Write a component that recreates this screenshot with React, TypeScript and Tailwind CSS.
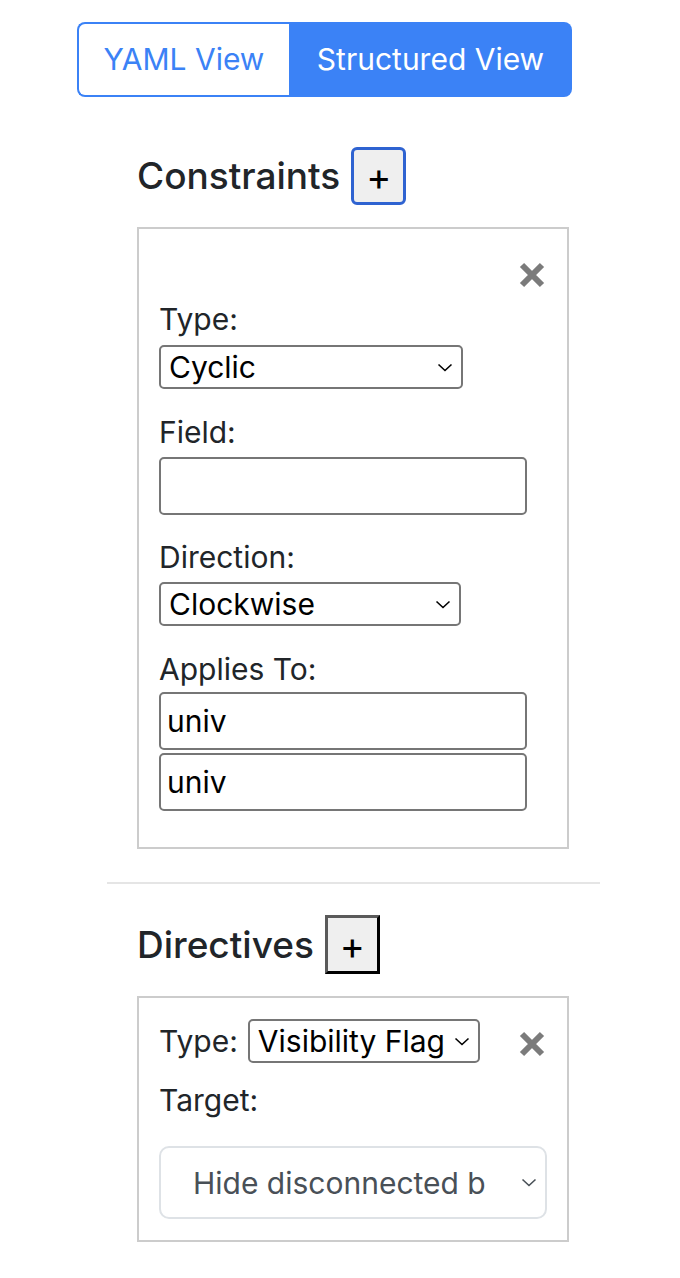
import React from "react";

const font = "font-['Inter','Noto_Sans',sans-serif]";

function Chevron({ className = "" }: { className?: string }) {
  return (
    <svg width="16" height="9" viewBox="0 0 16 9" className={className} fill="none">
      <path d="M1.5 1.5 L8 7.5 L14.5 1.5" stroke="currentColor" strokeWidth="1.6" />
    </svg>
  );
}

function CloseIcon() {
  return (
    <svg width="26" height="26" viewBox="0 0 26 26" className="shrink-0">
      <path d="M3 3 L23 23 M23 3 L3 23" stroke="#7b7b7b" strokeWidth="6" />
    </svg>
  );
}

function FakeSelect({ value, width }: { value: string; width: string }) {
  return (
    <div
      className={`${width} h-[44px] flex items-center justify-between border-2 border-[#767676] rounded-[5px] pl-[8px] pr-[8px] bg-white text-black text-[30px]`}
    >
      <span className="whitespace-nowrap leading-[36px]">{value}</span>
      <Chevron className="text-black shrink-0 ml-[4px]" />
    </div>
  );
}

function TextBox({ value = "", className = "" }: { value?: string; className?: string }) {
  return (
    <div
      className={`w-[368px] h-[58px] flex items-center border-2 border-[#767676] rounded-[5px] pl-[6px] bg-white text-black text-[30px] leading-[36px] ${className}`}
    >
      {value}
    </div>
  );
}

function Label({ children, className = "" }: { children: React.ReactNode; className?: string }) {
  return <div className={`h-[36px] leading-[36px] text-[30px] text-[#212529] ${className}`}>{children}</div>;
}

export default function App() {
  return (
    <div className={`${font} bg-white min-h-[1278px] pt-[22px]`}>
      {/* view toggle */}
      <div className="pl-[77px] flex">
        <div className="flex h-[75px]">
          <div className="w-[212px] flex items-center justify-center border-2 border-r-0 border-[#3b82f6] rounded-l-[8px] text-[30px] text-[#3b82f6]">
            YAML View
          </div>
          <div className="w-[283px] flex items-center justify-center bg-[#3b82f6] rounded-r-[8px] text-[30px] text-white">
            Structured View
          </div>
        </div>
      </div>

      <div className="ml-[107px] w-[493px]">
        {/* constraints */}
        <div className="pl-[30px]">
          <div className="mt-[50px] h-[58px] flex items-center">
            <h2 className="text-[37px] font-medium text-[#212529] leading-[44px]">Constraints</h2>
            <div className="ml-[11px] w-[55px] h-[58px] flex items-center justify-center border-[3px] border-[#2f63d1] rounded-[6px] bg-[#efefef] text-[38px] text-black leading-[40px]">
              +
            </div>
          </div>

          <div className="mt-[22px] w-[432px] border-2 border-[#cccccc] pt-[20px] px-[20px] pb-[36px]">
            <div className="h-[52px] flex items-center justify-end pr-[2px]">
              <CloseIcon />
            </div>
            <Label>Type:</Label>
            <div className="mt-[8px]">
              <FakeSelect value="Cyclic" width="w-[304px]" />
            </div>

            <Label className="mt-[25px]">Field:</Label>
            <TextBox className="mt-[7px]" />

            <Label className="mt-[24px]">Direction:</Label>
            <div className="mt-[7px]">
              <FakeSelect value="Clockwise" width="w-[302px]" />
            </div>

            <Label className="mt-[25px]">Applies To:</Label>
            <TextBox value="univ" className="mt-[5px]" />
            <TextBox value="univ" className="mt-[3px]" />
          </div>
        </div>

        <div className="mt-[33px] h-[2px] bg-[#e5e5e5]" />

        {/* directives */}
        <div className="pl-[30px]">
          <div className="mt-[31px] h-[59px] flex items-center">
            <h2 className="text-[37px] font-medium text-[#212529] leading-[44px]">Directives</h2>
            <div className="ml-[11px] w-[55px] h-[59px] flex items-center justify-center border-[3px] border-t-[#5a5a5a] border-l-[#5a5a5a] border-r-black border-b-black bg-[#efefef] text-[38px] text-black leading-[40px]">
              +
            </div>
          </div>

          <div className="mt-[22px] w-[432px] border-2 border-[#cccccc] pt-[21px] px-[20px] pb-[21px]">
            <div className="h-[44px] flex items-center">
              <span className="text-[30px] text-[#212529] leading-[36px]">Type:</span>
              <div className="ml-[10px]">
                <FakeSelect value="Visibility Flag" width="w-[232px]" />
              </div>
              <div className="ml-auto pr-[2px] pt-[6px]">
                <CloseIcon />
              </div>
            </div>
            <Label className="mt-[19px]">Target:</Label>
            <div className="mt-[28px] w-[388px] h-[73px] flex items-center justify-between border-2 border-[#dee2e6] rounded-[10px] pl-[32px] pr-[8px] text-[30px] text-[#495057]">
              <span className="whitespace-nowrap leading-[36px]">Hide disconnected b</span>
              <Chevron className="text-[#495057]" />
            </div>
          </div>
        </div>
      </div>
    </div>
  );
}
